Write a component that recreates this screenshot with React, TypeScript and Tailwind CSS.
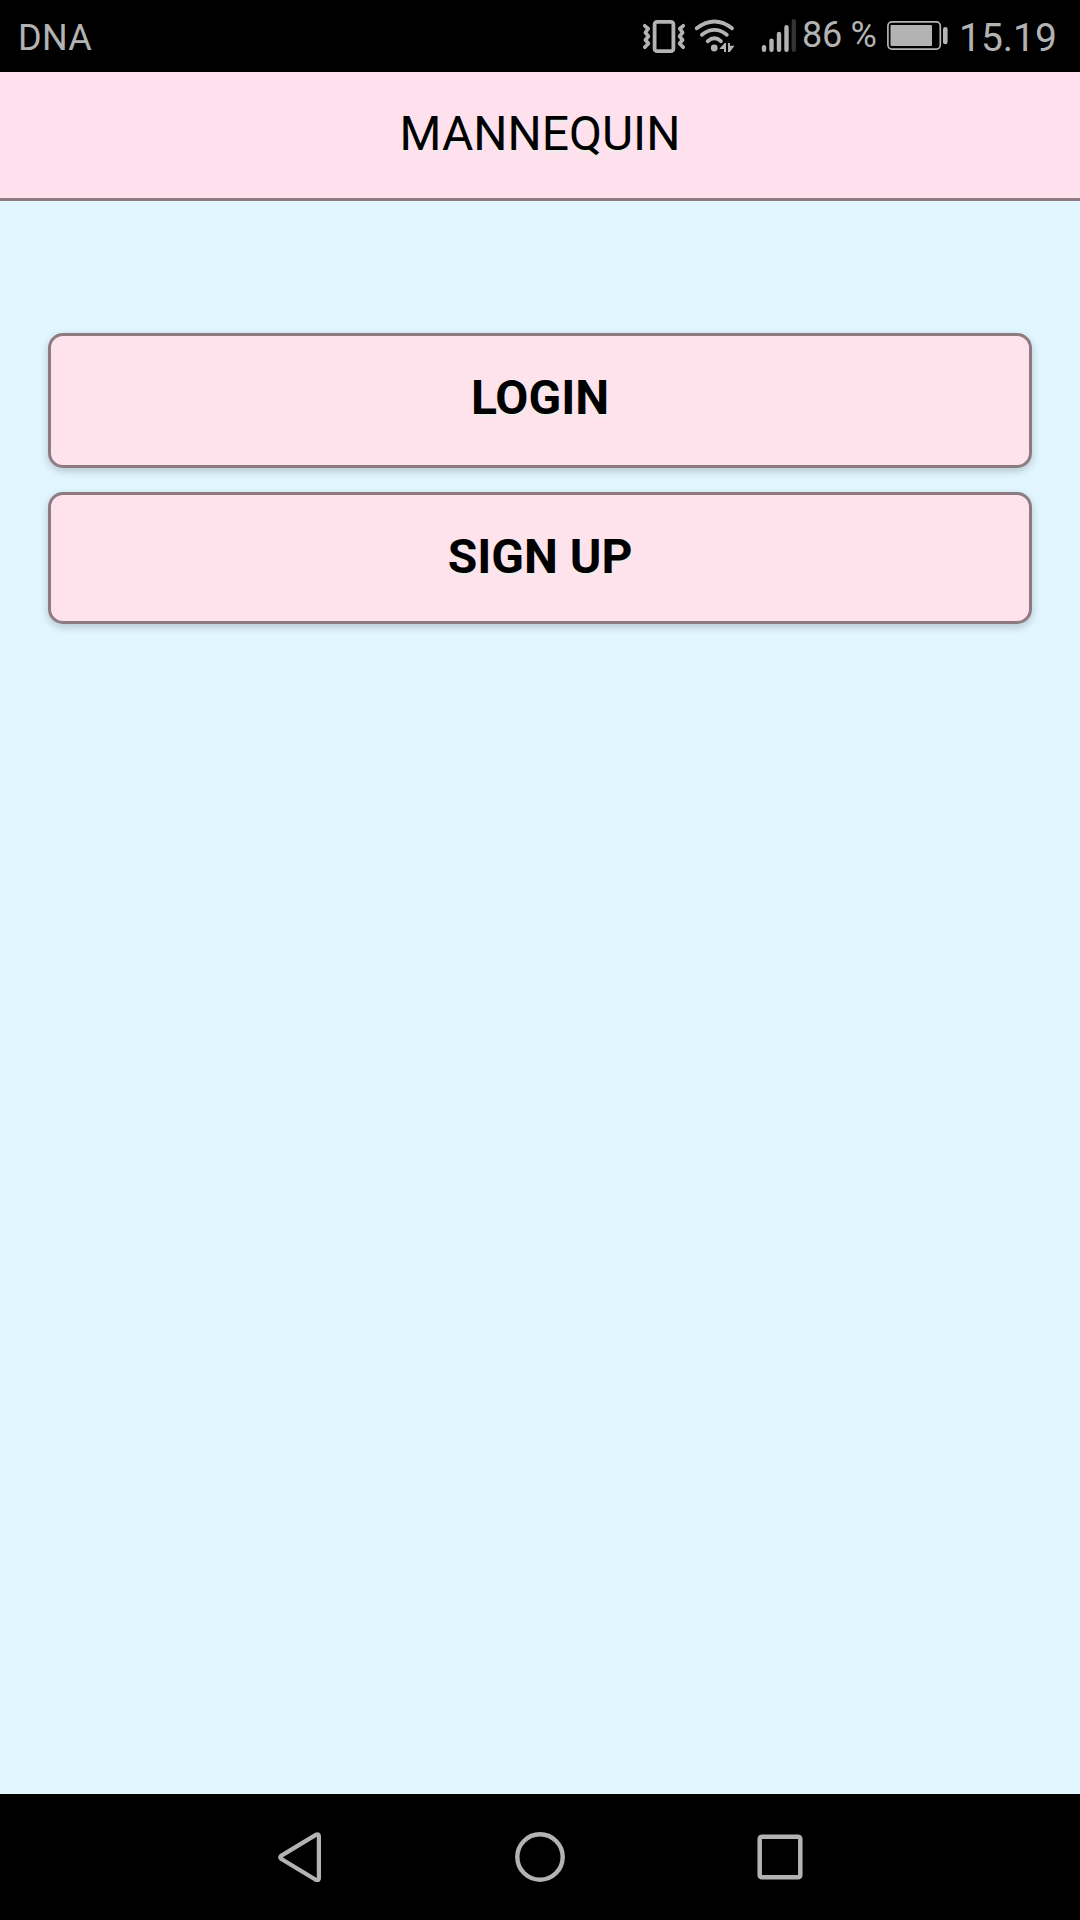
function StatusBar() {
  return (
    <div className="flex h-[72px] shrink-0 items-start bg-black text-[36px] leading-[42px] text-[#b3b3b3]">
      <span className="pt-[17px] pl-[18px] tracking-[0.3px]">DNA</span>
      <svg className="ml-auto h-[72px] w-[160px]" viewBox="640 0 160 72" fill="none" stroke="#b3b3b3" strokeLinecap="round">
        <rect x="654.6" y="21.8" width="18.8" height="29.4" rx="2.4" strokeWidth="3.8" />
        <path d="M644.8 25.8L648.2 28.7L645.4 32.5L648.4 36.3L645.4 40L648.4 43.4L644.8 47.2" strokeWidth="3.7" strokeLinejoin="round" />
        <path d="M683.2 25.8L679.8 28.7L682.6 32.5L679.6 36.3L682.6 40L679.6 43.4L683.2 47.2" strokeWidth="3.7" strokeLinejoin="round" />
        <path d="M696.7 28.3Q714.5 14.6 732 28.3M701.9 34.8Q714.5 25 726.8 34.8M707.7 41.2Q714.5 35.4 720.9 41.2" strokeWidth="3.8" />
        <circle cx="714.2" cy="48" r="3.4" fill="#b3b3b3" stroke="none" />
        <path d="M719.6 48.4L724.7 42.9H726V52H724V49H719.8zM728 42.9H729.9V45.8H734.5L729.8 52H728z" fill="#b3b3b3" stroke="none" />
        <path d="M764 47.2v2.6M771.5 40.6v9.2M779 34v15.8M786.5 27.3v22.5" strokeWidth="4.4" />
        <path d="M793.8 21.2v28.6" strokeWidth="4.4" stroke="#333333" />
      </svg>
      <span className="w-[78px] pt-[14px] pl-[2px] tracking-[-0.3px] whitespace-nowrap">86 %</span>
      <svg className="h-[72px] w-[80px]" viewBox="878 0 80 72" fill="#b3b3b3">
        <rect x="887.9" y="21.9" width="52.4" height="27.2" rx="4" fill="none" stroke="#b3b3b3" strokeWidth="1.7" />
        <rect x="890.5" y="25" width="41.5" height="21" rx="1" />
        <rect x="943" y="27" width="4.6" height="17.3" rx="2.2" />
      </svg>
      <span className="w-[122px] pt-[15px] pl-[1px] text-[39px] leading-[46px]">15.19</span>
    </div>
  );
}

function NavigationBar() {
  return (
    <div className="flex h-[126px] shrink-0 items-start justify-center gap-[190px] bg-black pt-[38px] text-[#b3b3b3]">
      <svg className="size-[50px]" viewBox="0 0 50 50" fill="none" stroke="currentColor" strokeWidth="4.2" strokeLinejoin="round">
        <path d="M6 23.9L41.2 2.6Q43.9 1.5 43.9 4.4V46.2Q43.9 49.1 41.2 48L6 26.7Q4.4 25.3 6 23.9z" />
      </svg>
      <svg className="size-[50px]" viewBox="0 0 50 50" fill="none" stroke="currentColor" strokeWidth="4.4">
        <circle cx="25" cy="25" r="22.7" />
      </svg>
      <svg className="size-[50px]" viewBox="0 0 50 50" fill="none" stroke="currentColor" strokeWidth="4.5">
        <rect x="4.7" y="4.7" width="40.6" height="40.6" rx="2" />
      </svg>
    </div>
  );
}

const buttonStyle =
  "flex w-full justify-center rounded-[15px] border-[3px] border-[#8e7b82] bg-[#ffe3ec] text-[48px] leading-[56px] font-bold text-black [text-shadow:0_3px_0_#eeebea] shadow-[0_3px_9px_rgba(0,0,0,0.2)]";

export default function App() {
  return (
    <div className="flex h-[1920px] w-[1080px] flex-col overflow-hidden bg-[#e1f6ff] font-['Roboto',sans-serif]">
      <StatusBar />
      <header className="flex h-[129px] shrink-0 justify-center border-b-[3px] border-[#8e7b82] bg-[#ffe1ee] pt-[34px] text-[48px] leading-[56px] text-black [text-shadow:0_3px_0_#eeebea]">
        <h1>MANNEQUIN</h1>
      </header>
      <main className="flex flex-1 flex-col gap-[24px] px-[48px] pt-[132px]">
        <button className={`${buttonStyle} h-[135px] pt-[34px]`}>LOGIN</button>
        <button className={`${buttonStyle} h-[132px] pt-[34px]`}>SIGN UP</button>
      </main>
      <NavigationBar />
    </div>
  );
}
